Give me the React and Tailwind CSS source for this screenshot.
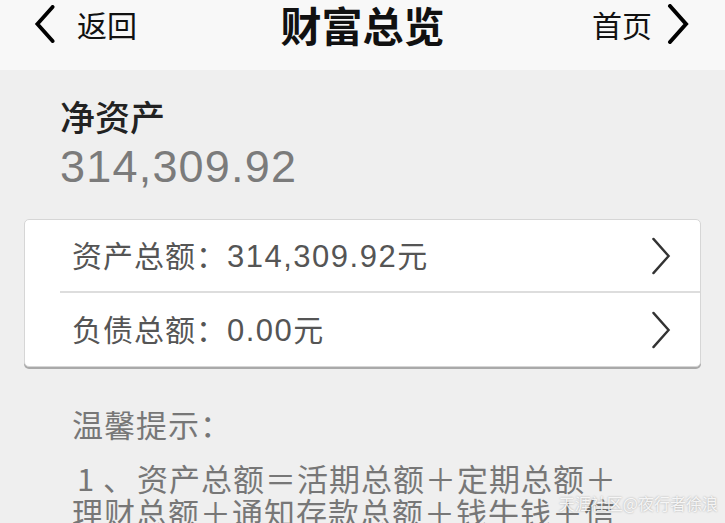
import React from 'react';

const Chevron = ({ dir = 'right', className = '', strokeWidth = 3 }) => (
  <svg viewBox="0 0 22 40" className={className} fill="none" stroke="currentColor" strokeWidth={strokeWidth} strokeLinecap="round" strokeLinejoin="miter">
    {dir === 'left' ? <polyline points="19,2 3,20 19,38" /> : <polyline points="3,2 19,20 3,38" />}
  </svg>
);

const rows = [
  { label: '资产总额', value: '314,309.92' },
  { label: '负债总额', value: '0.00' },
];

const latin = { fontFamily: '"Liberation Sans", sans-serif' };

const App = () => {
  return (
    <div
      className="relative h-[523px] overflow-hidden bg-[#efefef]"
      style={{ fontFamily: '"Noto Sans CJK SC", "Liberation Sans", sans-serif' }}
    >
      {/* Header */}
      <div className="h-[70px] bg-[#f8f8f8]">
        <div className="grid h-[48px] grid-cols-[1fr_auto_1fr] items-center">
          <div className="flex items-center pl-[34px]">
            <Chevron dir="left" strokeWidth={4} className="h-[38px] w-[22px] text-black" />
            <span className="ml-[21px] text-[30px] leading-none text-[#111]">返回</span>
          </div>
          <h1 className="text-[41px] font-bold leading-[48px] text-[#111]">财富总览</h1>
          <div className="flex items-center justify-end pr-[36px]">
            <span className="mr-[15px] text-[30px] leading-none text-[#111]">首页</span>
            <Chevron dir="right" strokeWidth={4} className="h-[40px] w-[22px] text-black" />
          </div>
        </div>
      </div>

      {/* Net assets */}
      <div className="px-[60px] pt-[24px]">
        <div className="text-[35px] font-medium leading-[44px] text-[#222]">净资产</div>
        <div className="mt-[4px] text-[45px] leading-[50px] tracking-[1.2px] text-[#7b7b7b]" style={latin}>
          314,309.92
        </div>
      </div>

      {/* Totals card */}
      <div className="mx-[24px] mt-[27px] rounded-[5px] border border-[#d6d6d6] bg-white shadow-[0_2px_0_#a9a9a9]">
        {rows.map((row, i) => (
          <div key={row.label} className={i > 0 ? 'ml-[35px] border-t-2 border-[#dddddd]' : ''}>
            <div className={`flex items-center pr-[28px] ${i > 0 ? 'h-[73px] pl-[12px]' : 'h-[71px] pl-[47px]'}`}>
              <span className="flex flex-1 items-baseline text-[30px] leading-none tracking-[1px] text-[#555]">
                <span>{row.label}：</span>
                <span className="text-[31px] tracking-[1.5px]" style={latin}>{row.value}</span>
                <span>元</span>
              </span>
              <Chevron dir="right" strokeWidth={2.5} className="h-[38px] w-[22px] text-[#333]" />
            </div>
          </div>
        ))}
      </div>

      {/* Tips */}
      <div className="px-[72px] pt-[40px] text-[31px] leading-[34px] tracking-[1px] text-[#777]">
        <div>温馨提示：</div>
        <div className="mt-[20px] flex whitespace-nowrap">
          <span className="w-[31px] shrink-0 pl-[5px]">1</span>
          <span className="w-[34px] shrink-0">、</span>
          <span>资产总额＝活期总额＋定期总额＋</span>
        </div>
        <div className="whitespace-nowrap">理财总额＋通知存款总额＋钱牛钱＋信</div>
      </div>

      {/* Watermark */}
      <div className="absolute bottom-[12px] right-[7px] text-[16px] leading-none text-white/85 [text-shadow:0_0_2px_rgba(0,0,0,0.35)]">
        天涯社区@夜行者徐浪
      </div>
    </div>
  );
};

export default App;
